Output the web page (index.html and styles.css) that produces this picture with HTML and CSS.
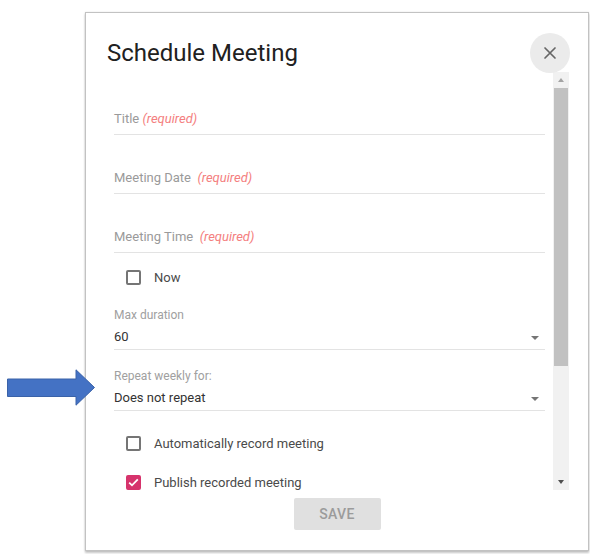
FILE: index.html
```html
<!DOCTYPE html>
<html lang="en">
<head>
<meta charset="utf-8">
<title>Schedule Meeting</title>
<link rel="stylesheet" href="styles.css">
</head>
<body>
<div class="stage">
  <div class="dialog">
    <div class="dialog-header">
      <h1 class="dialog-title">Schedule Meeting</h1>
      <button class="close-btn" aria-label="Close">
        <svg width="14" height="14" viewBox="0 0 14 14"><path d="M2 2L12 12M12 2L2 12" stroke="#666" stroke-width="1.7" stroke-linecap="round"/></svg>
      </button>
    </div>
    <div class="dialog-body">
      <div class="scroll-content">
        <div class="text-field first"><span class="ph">Title</span> <span class="req">(required)</span></div>
        <div class="text-field"><span class="ph">Meeting Date</span>&nbsp; <span class="req">(required)</span></div>
        <div class="text-field"><span class="ph">Meeting Time</span>&nbsp; <span class="req">(required)</span></div>
        <label class="check-row now"><span class="box"></span><span class="check-label">Now</span></label>
        <div class="select-field first-select">
          <div class="small-label">Max duration</div>
          <div class="select-value"><span>60</span><span class="caret"></span></div>
        </div>
        <div class="select-field">
          <div class="small-label">Repeat weekly for:</div>
          <div class="select-value"><span>Does not repeat</span><span class="caret"></span></div>
        </div>
        <label class="check-row auto"><span class="box"></span><span class="check-label">Automatically record meeting</span></label>
        <label class="check-row publish"><span class="box checked"><svg width="11" height="9" viewBox="0 0 11 9"><path d="M1.2 4.6L4 7.3L9.8 1.3" fill="none" stroke="#fff" stroke-width="1.8"/></svg></span><span class="check-label">Publish recorded meeting</span></label>
      </div>
      <div class="scrollbar">
        <div class="sb-btn"><span class="sb-up"></span></div>
        <div class="sb-thumb"></div>
        <div class="sb-rest"></div>
        <div class="sb-btn"><span class="sb-down"></span></div>
      </div>
    </div>
    <div class="dialog-footer">
      <button class="save-btn">SAVE</button>
    </div>
  </div>
  <svg class="pointer-arrow" width="90" height="38" viewBox="0 0 90 38">
    <polygon points="0.5,10 69,10 69,0.8 87.5,18.5 69,36.2 69,27.5 0.5,27.5" fill="#4472c4" stroke="#3a62a8" stroke-width="1"/>
  </svg>
</div>
</body>
</html>
```

FILE: styles.css
```css
* { box-sizing: border-box; }
html, body { margin: 0; padding: 0; background: #fff; }
body { font-family: Roboto, "Liberation Sans", Arial, sans-serif; }

.stage {
  position: relative;
  width: 590px;
  height: 554px;
  padding: 12px 0 0 85px;
}

.dialog {
  width: 504px;
  height: 539px;
  border: 1px solid #c2c2c2;
  box-shadow: 0 2px 2px rgba(0,0,0,0.22), 0 0 2px rgba(0,0,0,0.10);
  background: #fff;
  display: flex;
  flex-direction: column;
}

.dialog-header {
  height: 59px;
  display: flex;
  align-items: flex-end;
  justify-content: space-between;
  padding: 0 18px 0 21px;
}
.dialog-title {
  margin: 0;
  font-weight: 400;
  font-size: 24px;
  line-height: 40px;
  color: #212121;
  margin-bottom: -1px;
}
.close-btn {
  width: 40px;
  height: 40px;
  border-radius: 50%;
  border: none;
  background: #ebebeb;
  display: flex;
  align-items: center;
  justify-content: center;
  padding: 0;
  margin-bottom: -1px;
  position: relative;
  z-index: 1;
}

.dialog-body {
  height: 419px;
  display: flex;
  padding-right: 19px;
}
.scroll-content {
  flex: 1;
  overflow: hidden;
  padding: 0 8px 0 28px;
}

.text-field {
  padding: 35px 0 7px;
  border-bottom: 1px solid #e3e3e3;
  font-size: 13px;
  line-height: 16px;
  white-space: nowrap;
}
.text-field.first { padding-top: 39px; }
.ph { color: #9a9a9a; }
.req { color: #f47f7f; font-style: italic; }

.check-row {
  display: flex;
  align-items: center;
  height: 16px;
  padding-left: 12px;
  font-size: 13px;
  color: #4a4a4a;
}
.check-row.now { margin-top: 16px; }
.check-row.auto { margin-top: 24px; }
.check-row.publish { margin-top: 23px; }
.box {
  width: 15px;
  height: 15px;
  border: 2px solid #757575;
  border-radius: 2px;
  margin-right: 13px;
  display: flex;
  align-items: center;
  justify-content: center;
  flex: none;
}
.box.checked {
  background: #d6336c;
  border-color: #d6336c;
}

.select-field {
  border-bottom: 1px solid #e3e3e3;
  padding-bottom: 4px;
  margin-top: 19px;
}
.select-field.first-select { margin-top: 23px; }
.small-label {
  font-size: 12px;
  line-height: 14px;
  color: #a0a0a0;
}
.select-value {
  margin-top: 7px;
  display: flex;
  justify-content: space-between;
  align-items: center;
  font-size: 13px;
  line-height: 16px;
  color: #333;
  padding-right: 6px;
}
.caret {
  width: 0;
  height: 0;
  border-left: 4px solid transparent;
  border-right: 4px solid transparent;
  border-top: 4px solid #757575;
  margin-top: 2px;
}

.scrollbar {
  width: 16px;
  height: 418px;
  background: #f1f1f1;
  display: flex;
  flex-direction: column;
}
.sb-btn {
  height: 16px;
  display: flex;
  align-items: center;
  justify-content: center;
}
.sb-up {
  width: 0; height: 0;
  border-left: 3.5px solid transparent;
  border-right: 3.5px solid transparent;
  border-bottom: 4px solid #a3a3a3;
}
.sb-down {
  width: 0; height: 0;
  border-left: 3.5px solid transparent;
  border-right: 3.5px solid transparent;
  border-top: 4px solid #505050;
}
.sb-thumb {
  height: 278px;
  margin: 0 1px;
  background: #c1c1c1;
}
.sb-rest { flex: 1; }

.dialog-footer {
  display: flex;
  justify-content: center;
  padding-top: 7px;
}
.save-btn {
  width: 87px;
  height: 32px;
  border: none;
  border-radius: 2px;
  background: #e0e0e0;
  color: #9b9b9b;
  font-family: Roboto, "Liberation Sans", Arial, sans-serif;
  font-size: 14px;
  font-weight: 500;
  letter-spacing: 0.3px;
  padding: 0;
}

.pointer-arrow {
  position: absolute;
  left: 7px;
  top: 369px;
}
```
